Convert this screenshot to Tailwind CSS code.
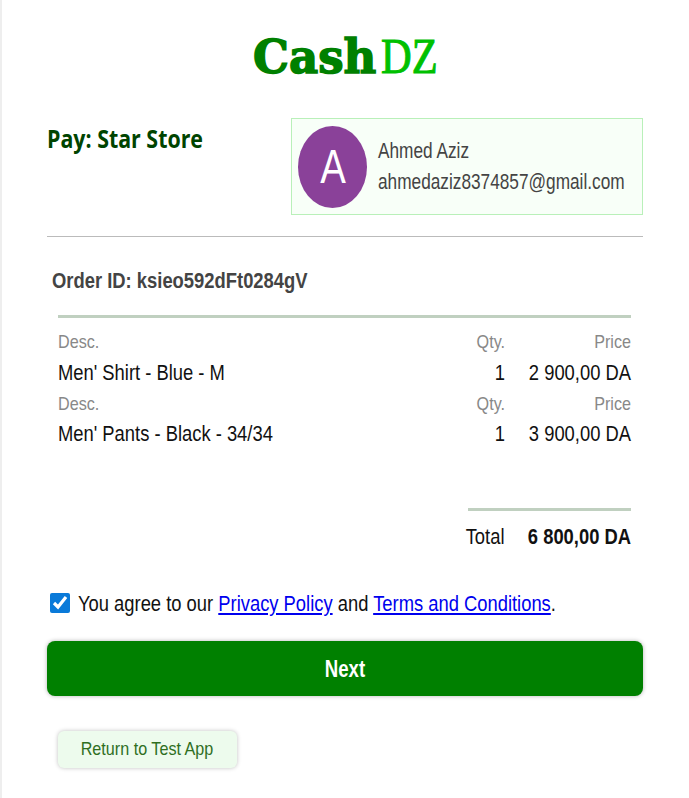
<!doctype html>
<html lang="en">
<head>
  <meta charset="utf-8" />
  <title>CashDZ</title>
  <script src="https://cdn.jsdelivr.net/npm/@tailwindcss/browser@4"></script>
</head>
<body class="bg-white font-['Liberation_Sans',sans-serif]">
  <div class="h-[798px] border-l-2 border-[#eeeeee] pl-[45px] pr-[46px] overflow-hidden">
    <div class="flex justify-center items-baseline pt-[26px] h-[116px] leading-[60px] whitespace-nowrap">
      <span class="w-[128px] font-['DejaVu_Serif',serif] font-bold text-[47px] text-[#008000] origin-left scale-x-[.96] inline-block [-webkit-text-stroke:1.5px]">Cash</span>
      <span class="w-[56px] font-['Liberation_Serif',serif] text-[50px] text-[#00c000] origin-left scale-x-[.85] inline-block [-webkit-text-stroke:1px]">DZ</span>
    </div>

    <div class="flex justify-between h-[119px] pt-[2px]">
      <h1 class="pt-[5px] font-['Open_Sans',sans-serif] font-bold text-[25px] leading-[30px] text-[#004400] origin-left scale-x-[.855] whitespace-nowrap">Pay: Star Store</h1>
      <div class="w-[352px] h-[97px] border border-[#b9f0b9] bg-[#f8fff8] flex items-center pl-[6px]">
        <div class="w-[69px] h-[82px] rounded-[50%] bg-[#8a4199] flex items-center justify-center shrink-0">
          <span class="text-white text-[48px] scale-x-[.8] translate-x-px">A</span>
        </div>
        <div class="ml-[11px] text-[#444444] text-[22px] leading-[31px] origin-left scale-x-[.784] -translate-y-px whitespace-nowrap">
          <p>Ahmed Aziz</p>
          <p>ahmedaziz8374857@gmail.com</p>
        </div>
      </div>
    </div>

    <hr class="border-t border-[#bbbbbb] mt-[1px]" />

    <p class="mt-[28px] ml-[5px] text-[22px] leading-[32px] font-bold text-[#444444] origin-left scale-x-[.836] whitespace-nowrap">Order ID: ksieo592dFt0284gV</p>

    <div class="ml-[11px] mr-[12px] mt-[18px] border-t-[3px] border-[#c0d0c0] pt-[12px]">
      <div class="grid grid-cols-[1fr_50px_126px] text-[19px] leading-[24px] text-[#888888] h-[24px]">
        <span class="origin-left scale-x-[.85]">Desc.</span>
        <span class="text-right origin-right scale-x-[.85]">Qty.</span>
        <span class="text-right origin-right scale-x-[.85]">Price</span>
      </div>
      <div class="grid grid-cols-[1fr_50px_126px] text-[22px] leading-[38px] text-[#111111] h-[38px]">
        <span class="origin-left scale-x-[.835] whitespace-nowrap">Men' Shirt - Blue - M</span>
        <span class="text-right origin-right scale-x-[.835]">1</span>
        <span class="text-right origin-right scale-x-[.835] whitespace-nowrap">2 900,00 DA</span>
      </div>
      <div class="grid grid-cols-[1fr_50px_126px] text-[19px] leading-[24px] text-[#888888] h-[24px]">
        <span class="origin-left scale-x-[.85]">Desc.</span>
        <span class="text-right origin-right scale-x-[.85]">Qty.</span>
        <span class="text-right origin-right scale-x-[.85]">Price</span>
      </div>
      <div class="grid grid-cols-[1fr_50px_126px] text-[22px] leading-[36px] text-[#111111] h-[38px]">
        <span class="origin-left scale-x-[.835] whitespace-nowrap">Men' Pants - Black - 34/34</span>
        <span class="text-right origin-right scale-x-[.835]">1</span>
        <span class="text-right origin-right scale-x-[.835] whitespace-nowrap">3 900,00 DA</span>
      </div>
    </div>

    <div class="ml-auto mr-[12px] w-[163px] mt-[54px] border-t-[3px] border-[#c0d0c0]"></div>
    <div class="mr-[12px] mt-[10px] flex justify-end text-[22px] leading-[32px] text-[#111111]">
      <span class="origin-right scale-x-[.835] -translate-x-px">Total</span>
      <span class="w-[126px] text-right font-bold origin-right scale-x-[.835] whitespace-nowrap">6 800,00 DA</span>
    </div>

    <label class="mt-[34px] ml-[3px] flex items-center h-[32px]">
      <input type="checkbox" checked class="w-[20px] h-[22px] m-0 accent-[#0a7ad9] shrink-0" />
      <span class="ml-[8px] text-[22px] text-[#111111] origin-left scale-x-[.835] whitespace-nowrap">You agree to our <a href="#" class="text-[#0000ee] underline">Privacy Policy</a> and <a href="#" class="text-[#0000ee] underline">Terms and Conditions</a>.</span>
    </label>

    <button type="button" class="mt-[22px] block w-[596px] h-[55px] rounded-lg bg-[#008000] shadow-[0_0_4px_rgba(0,0,0,0.3)] text-white font-bold text-[23px] pt-[2px]">
      <span class="inline-block scale-x-[.81]">Next</span>
    </button>

    <button type="button" class="mt-[35px] ml-[11px] block w-[179px] h-[37px] rounded-md bg-[#edfbed] shadow-[0_0_4px_rgba(0,0,0,0.25)] text-[#2f6f1f] text-[19px]">
      <span class="inline-block scale-x-[.85] whitespace-nowrap -translate-x-px">Return to Test App</span>
    </button>
  </div>
</body>
</html>
